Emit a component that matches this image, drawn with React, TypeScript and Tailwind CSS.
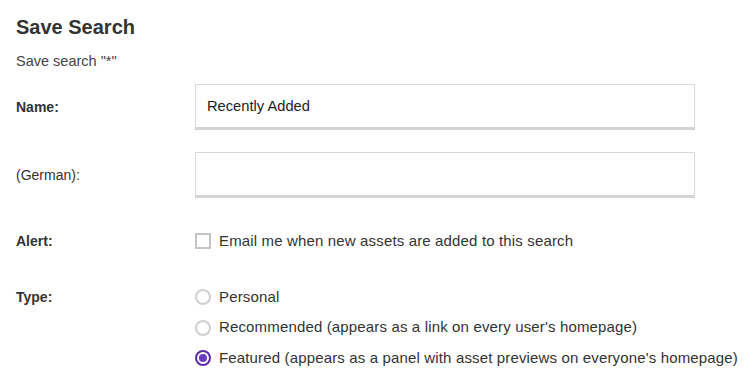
import React, { useState } from 'react';

const typeOptions = [
  { id: 'personal', label: 'Personal' },
  { id: 'recommended', label: "Recommended (appears as a link on every user's homepage)" },
  { id: 'featured', label: "Featured (appears as a panel with asset previews on everyone's homepage)" },
];

const Radio: React.FC<{ checked: boolean }> = ({ checked }) =>
  checked ? (
    <span className="flex h-4 w-4 shrink-0 items-center justify-center rounded-full border-2 border-[#5b2ca6] bg-white">
      <span className="h-2 w-2 rounded-full bg-[#6a3cc0]" />
    </span>
  ) : (
    <span className="h-4 w-4 shrink-0 rounded-full border-2 border-[#cfcfcf] bg-white" />
  );

const TextField: React.FC<{ value: string; onChange: (v: string) => void }> = ({ value, onChange }) => (
  <input
    type="text"
    value={value}
    onChange={(e) => onChange(e.target.value)}
    className="h-[46px] w-[500px] border border-[#d9d9d9] border-b-[3px] border-b-[#d4d4d4] bg-white px-[11px] text-[14.7px] text-[#222] outline-none"
  />
);

export default function App() {
  const [name, setName] = useState('Recently Added');
  const [german, setGerman] = useState('');
  const [alert, setAlert] = useState(false);
  const [type, setType] = useState('featured');

  return (
    <div className="h-[386px] w-[750px] overflow-hidden bg-white pl-4 font-['Liberation_Sans',Arial,sans-serif] text-[#333]">
      <h2 className="pt-[15px] text-[20px] font-bold leading-6 text-[#333]">Save Search</h2>
      <p className="mt-[14px] text-[14.5px] leading-4 text-[#444]">Save search "*"</p>

      {/* Name */}
      <div className="mt-[15px] flex items-center">
        <label className="w-[179px] text-[14px] font-bold">Name:</label>
        <TextField value={name} onChange={setName} />
      </div>

      {/* German */}
      <div className="mt-[22px] flex items-center">
        <label className="w-[179px] text-[14px]">(German):</label>
        <TextField value={german} onChange={setGerman} />
      </div>

      {/* Alert */}
      <div className="mt-[33px] flex h-5 items-center">
        <span className="w-[179px] text-[14px] font-bold">Alert:</span>
        <label
          className="flex cursor-pointer items-center gap-2 text-[15px] tracking-[0.15px]"
          onClick={() => setAlert(!alert)}
        >
          <span
            className={`flex h-4 w-4 items-center justify-center border-2 ${alert ? 'border-[#5b2ca6]' : 'border-[#c4c4c4]'}`}
          >
            {alert && <span className="h-2 w-2 bg-[#6a3cc0]" />}
          </span>
          Email me when new assets are added to this search
        </label>
      </div>

      {/* Type */}
      <div className="mt-[36px] flex items-start">
        <span className="w-[179px] text-[14px] font-bold leading-5">Type:</span>
        <div className="flex flex-col gap-[10.5px]">
          {typeOptions.map((opt) => (
            <div
              key={opt.id}
              className="flex h-5 cursor-pointer items-center gap-2 text-[15px] tracking-[0.15px]"
              onClick={() => setType(opt.id)}
            >
              <Radio checked={type === opt.id} />
              {opt.label}
            </div>
          ))}
        </div>
      </div>
    </div>
  );
}
